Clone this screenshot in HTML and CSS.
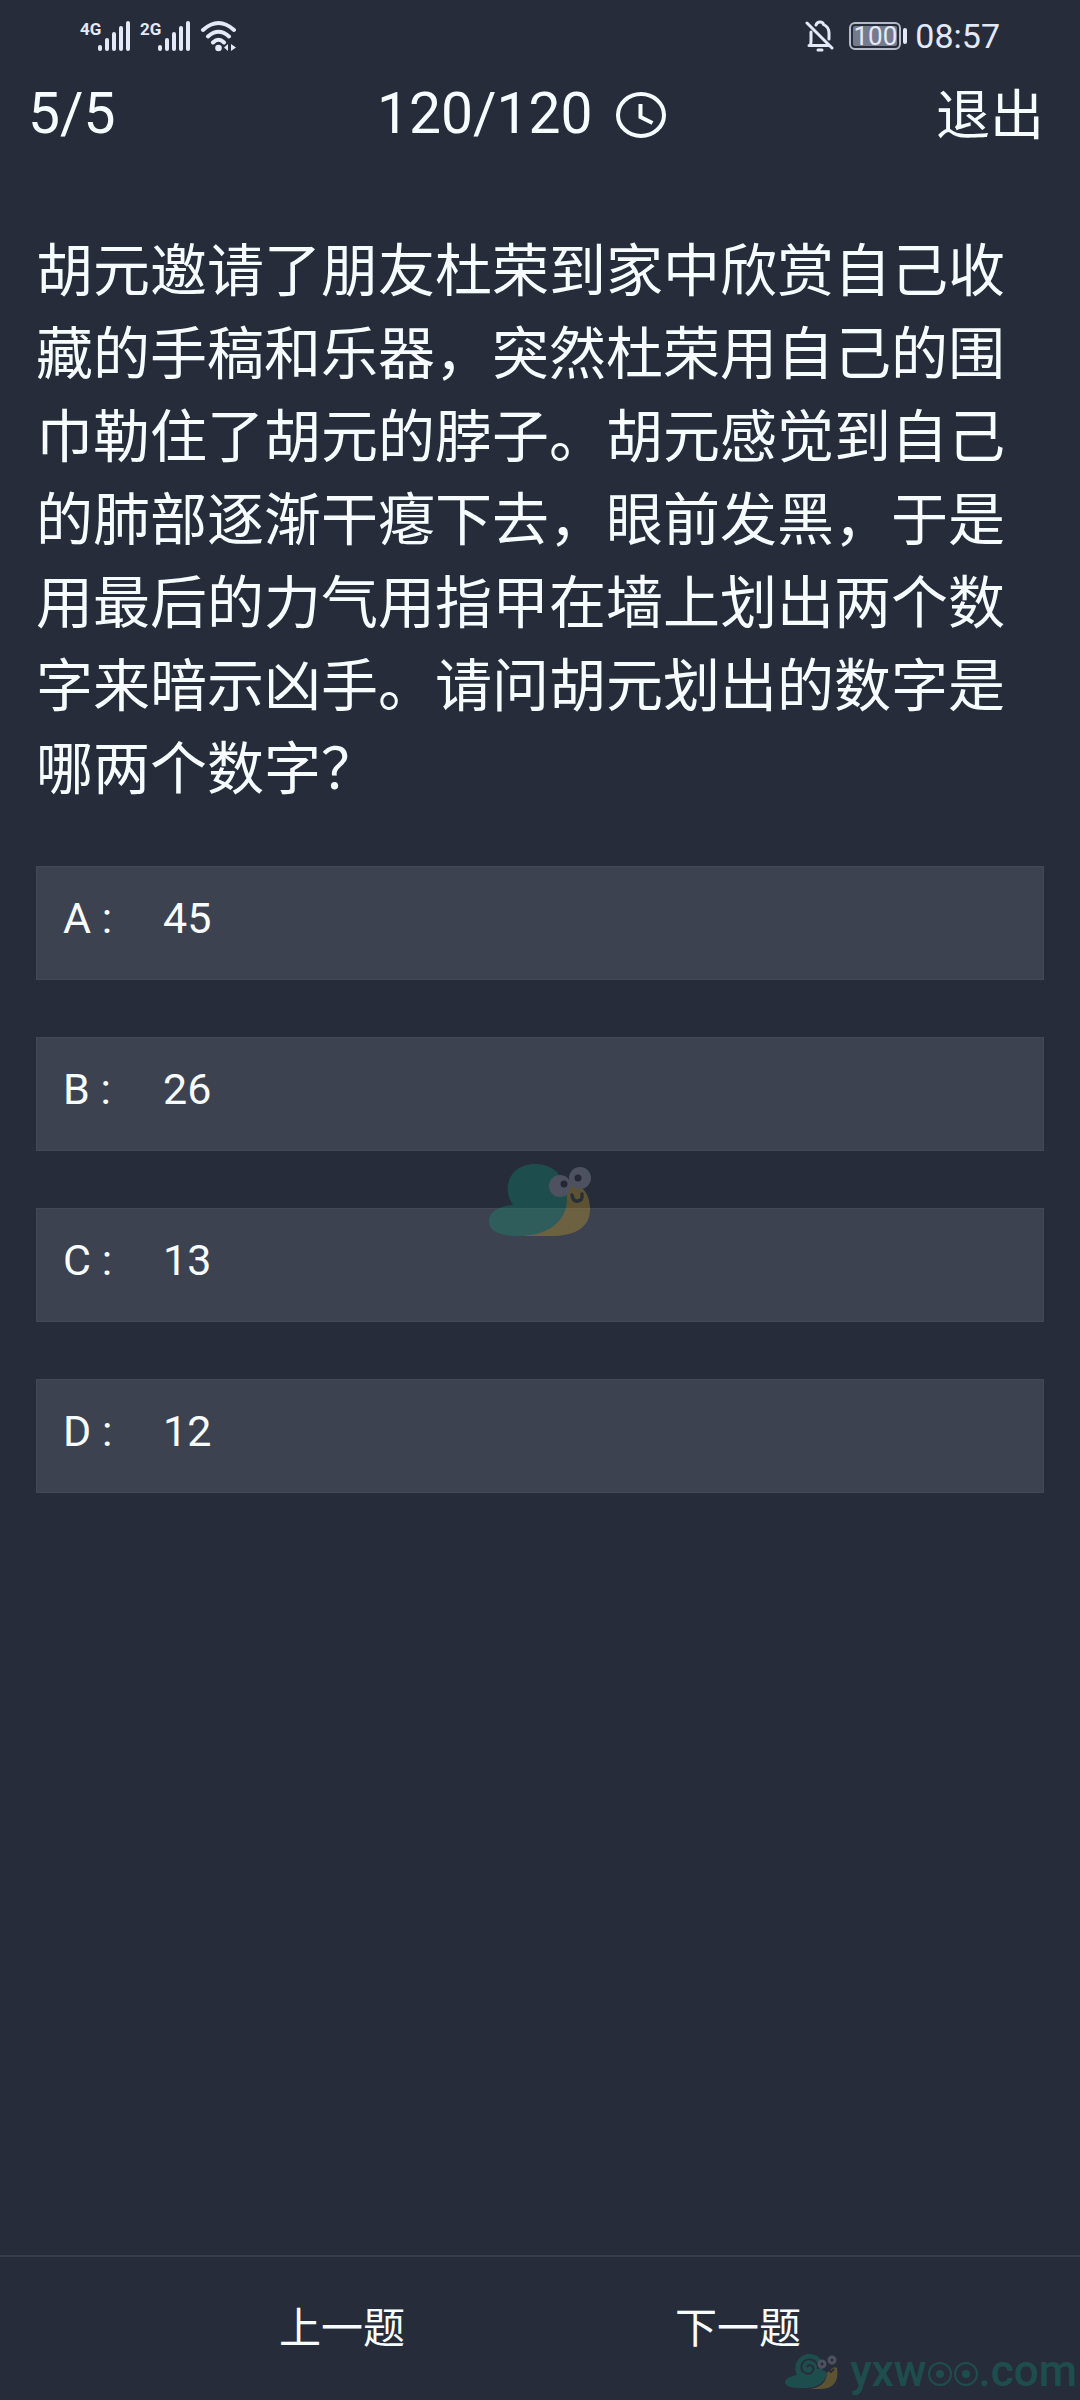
FILE: index.html
```html
<!DOCTYPE html>
<html lang="zh-CN">
<head>
  <meta charset="UTF-8">
  <title>答题</title>
  <meta name="viewport" content="width=device-width, initial-scale=1.0">
  <link rel="stylesheet" href="styles.css">
</head>
<body>
  <!-- Status bar -->
  <div class="status-bar">
    <div class="status-left">
      <svg class="signal" width="50" height="36" viewBox="0 0 50 36">
        <text x="0" y="17">4G</text>
        <path d="M20 31v-2M27 31v-9M34 31V16M41 31V10M48 31V5"/>
      </svg>
      <svg class="signal" width="50" height="36" viewBox="0 0 50 36">
        <text x="0" y="17">2G</text>
        <path d="M20 31v-2M27 31v-9M34 31V16M41 31V10M48 31V5"/>
      </svg>
      <svg class="wifi" width="38" height="36" viewBox="0 0 38 36">
        <path d="M3 12Q18.500-2 34 12M8 18.500Q18.500 9 29 18.500M13 24.500Q18.500 19 24 24.500"/>
        <circle cx="18.500" cy="30" r="3.300"/>
        <path class="arrows" d="M28 26v7l-4-3.500zM31 26v7l5-3.500z"/>
      </svg>
    </div>
    <div class="status-right">
      <svg class="bell" width="30" height="32" viewBox="0 0 30 32">
        <path d="M2 3l25 25M4 25.500h19M5.500 25Q6 23 6 21V12M11 5Q12 2 15 2T18.500 4.500Q24 7 24 13v6"/>
        <path d="M13 30h4"/>
      </svg>
      <div class="battery"><span>100</span></div>
      <span class="clock">08:57</span>
    </div>
  </div>

  <!-- Progress, timer, exit -->
  <div class="header">
    <span>5/5</span>
    <div class="timer">
      <span>120/120</span>
      <svg width="52" height="48" viewBox="0 0 52 48">
        <ellipse cx="26" cy="25" rx="23" ry="21"/>
        <path d="M25.500 14v13l12 6"/>
      </svg>
    </div>
    <button class="exit-btn">退出</button>
  </div>

  <div class="main">
    <p class="question">胡元邀请了朋友杜荣到家中欣赏自己收藏的手稿和乐器，突然杜荣用自己的围巾勒住了胡元的脖子。胡元感觉到自己的肺部逐渐干瘪下去，眼前发黑，于是用最后的力气用指甲在墙上划出两个数字来暗示凶手。请问胡元划出的数字是哪两个数字？</p>

    <div class="options">
      <button class="option"><span class="key">A :</span><span>45</span></button>
      <button class="option"><span class="key">B :</span><span>26</span></button>
      <button class="option"><span class="key">C :</span><span>13</span></button>
      <button class="option"><span class="key">D :</span><span>12</span></button>
    </div>
  </div>

  <div class="footer">
    <button>上一题</button>
    <button>下一题</button>
  </div>

  <!-- Snail over the options -->
  <svg class="snail" width="102" height="74" viewBox="0 0 102 74">
    <path fill="#d9ac22" d="M76 22C92 18 101 30 101 46C101 66 84 73 62 73H32C60 70 76 56 76 22z"/>
    <path fill="#0c9b78" d="M24 42C12 25 21 1 46 1C67 1 78 17 78 36C78 59 58 73 30 73C12 73 0 69 0 58C0 48 12 43 24 42z"/>
    <circle cx="71" cy="23" r="11" fill="#a5a8b5"/>
    <circle cx="91" cy="15" r="11" fill="#a5a8b5"/>
    <circle cx="75" cy="21" r="3.500" fill="#20222c"/>
    <circle cx="89" cy="15" r="3.500" fill="#20222c"/>
    <path d="M83 32Q84 39 89 38T93 31" fill="none" stroke="#33323a" stroke-width="3.500" stroke-linecap="round"/>
  </svg>

  <!-- Site mark -->
  <div class="site-mark">
    <svg width="54" height="40" viewBox="0 0 54 40">
      <path fill="#d9ac22" d="M43 22Q50 14 53 17Q56 38 36 38H26Q42 36 43 22z"/>
      <path fill="#0c9b78" d="M13 24C8 13 16 2 27 3C36 4 40 11 38 19Q43 20 43 23Q39 37 20 37C8 37 1 36 1 31Q2 26 13 24z"/>
      <path d="M34 18C35 8 22 5 18 13C15 21 25 26 29 20C31 15 25 12 23 16" fill="none" stroke="#272c3b" stroke-width="2"/>
      <g fill="#272c3b" stroke="#a5a8b5" stroke-width="3">
        <circle cx="38" cy="13" r="3"/>
        <circle cx="48" cy="9" r="3"/>
      </g>
      <path d="M44 18l3 3 3-3" fill="none" stroke="#33323a" stroke-width="2"/>
    </svg>
    <span class="site-name">yxw<svg width="52" height="28" viewBox="0 0 52 28">
      <g fill="none" stroke="currentColor" stroke-width="2">
        <circle cx="13" cy="14" r="11"/>
        <circle cx="39" cy="14" r="11"/>
      </g>
      <g fill="currentColor">
        <circle cx="13" cy="14" r="4"/>
        <circle cx="39" cy="14" r="4"/>
      </g>
    </svg>.com</span>
  </div>
</body>
</html>
```
FILE: styles.css
```css
/* Reset */
* {
  margin: 0;
  padding: 0;
  box-sizing: border-box;
}

body {
  background: #272c3b;
  color: #f7fdff;
  font-family: Roboto, "Noto Sans CJK SC", sans-serif;
  min-height: 100vh;
  display: flex;
  flex-direction: column;
  position: relative;
}

button {
  background: none;
  border: none;
  color: inherit;
  font-family: inherit;
  cursor: pointer;
}

svg {
  flex: none;
}

/* Status bar */
.status-bar {
  height: 72px;
  padding: 0 80px;
  display: flex;
  justify-content: space-between;
  align-items: center;
  color: #e3e9f8;
}

.status-left {
  display: flex;
  gap: 10px;
}

.status-right {
  display: flex;
  align-items: center;
}

.signal {
  fill: currentColor;
  font-size: 17px;
  font-weight: bold;
}

.signal path,
.wifi path {
  fill: none;
  stroke: currentColor;
  stroke-width: 4;
  stroke-linecap: round;
}

.wifi {
  fill: currentColor;
}

.wifi .arrows {
  fill: currentColor;
  stroke: none;
}

.bell {
  fill: none;
  stroke: currentColor;
  stroke-width: 3;
  stroke-linecap: round;
}

.battery {
  position: relative;
  width: 52px;
  height: 28px;
  margin: 0 14px 0 14px;
  padding: 2px;
  border: 2px solid #b4bac9;
  border-radius: 6px;
}

.battery span {
  display: block;
  height: 20px;
  background: #747b8c;
  border-radius: 2px;
  font-size: 26px;
  line-height: 20px;
  text-align: center;
}

.battery::after {
  content: "";
  position: absolute;
  top: 4px;
  right: -8px;
  width: 4px;
  height: 16px;
  border-radius: 2px;
  background: currentColor;
}

.clock {
  font-size: 34px;
}

/* Header */
.header {
  height: 84px;
  padding: 0 36px 0 28px;
  display: flex;
  justify-content: space-between;
  align-items: center;
  font-size: 57px;
  line-height: 84px;
}

.timer {
  display: flex;
  align-items: center;
  gap: 22px;
  margin-right: 8px;
}

.timer svg {
  fill: none;
  stroke: currentColor;
  stroke-width: 4;
}

.exit-btn {
  font-size: 54px;
  padding-bottom: 6px;
}

/* Question */
.main {
  flex: 1;
  padding: 74px 36px;
}

.question {
  font-size: 57px;
  line-height: 83px;
  margin-bottom: 55px;
}

.options {
  display: flex;
  flex-direction: column;
  gap: 57px;
}

.option {
  height: 114px;
  padding: 0 26px 10px;
  display: flex;
  align-items: center;
  background: #3d4250;
  border: 1px solid #434856;
  font-size: 43px;
  text-align: left;
}

.key {
  width: 100px;
}

/* Footer */
.footer {
  height: 145px;
  padding-bottom: 8px;
  border-top: 2px solid #373c4a;
  display: flex;
  justify-content: center;
  align-items: center;
  gap: 270px;
}

.footer button {
  font-size: 42px;
}

/* Marks lying over the page */
.snail {
  position: absolute;
  top: 1163px;
  left: 50%;
  margin-left: -51px;
  opacity: 0.3;
  pointer-events: none;
}

.site-mark {
  position: absolute;
  right: 3px;
  bottom: 2px;
  display: flex;
  align-items: center;
  gap: 12px;
  opacity: 0.3;
  pointer-events: none;
}

.site-name {
  color: #0c9b78;
  font-size: 44px;
  line-height: 54px;
  font-weight: 500;
}

.site-name svg {
  vertical-align: -2px;
}
```
